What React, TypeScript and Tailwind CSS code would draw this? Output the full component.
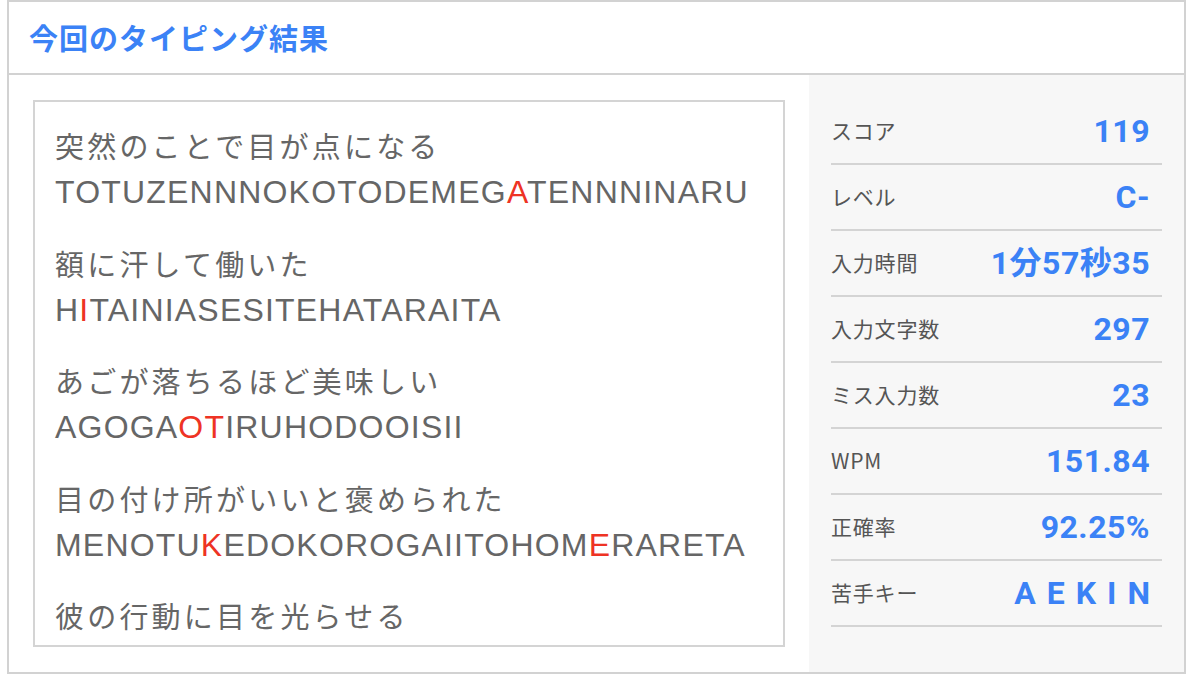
import React from "react";

type Seg = { t: string; miss?: boolean };

const groups: { jp: string; ro: Seg[] }[] = [
  {
    jp: "突然のことで目が点になる",
    ro: [{ t: "TOTUZENNNOKOTODEMEG" }, { t: "A", miss: true }, { t: "TENNNINARU" }],
  },
  {
    jp: "額に汗して働いた",
    ro: [{ t: "H" }, { t: "I", miss: true }, { t: "TAINIASESITEHATARAITA" }],
  },
  {
    jp: "あごが落ちるほど美味しい",
    ro: [{ t: "AGOGA" }, { t: "OT", miss: true }, { t: "IRUHODOOISII" }],
  },
  {
    jp: "目の付け所がいいと褒められた",
    ro: [
      { t: "MENOTU" },
      { t: "K", miss: true },
      { t: "EDOKOROGAIITOHOM" },
      { t: "E", miss: true },
      { t: "RARETA" },
    ],
  },
  {
    jp: "彼の行動に目を光らせる",
    ro: [],
  },
];

const stats: { label: string; value: string; wide?: boolean }[] = [
  { label: "スコア", value: "119" },
  { label: "レベル", value: "C-" },
  { label: "入力時間", value: "1分57秒35" },
  { label: "入力文字数", value: "297" },
  { label: "ミス入力数", value: "23" },
  { label: "WPM", value: "151.84" },
  { label: "正確率", value: "92.25%" },
  { label: "苦手キー", value: "AEKIN", wide: true },
];

export default function App() {
  return (
    <div className="w-[1188px] h-[678px] bg-white overflow-hidden">
      <div className="ml-[7px] w-[1179px] h-[674px] border-2 border-[#d2d2d2] flex flex-col">
        <div className="h-[73px] shrink-0 border-b-2 border-[#d2d2d2] flex items-center pl-[20px]">
          <h1
            className="text-[29px] font-bold text-[#3b82f6] tracking-[1px] leading-none"
            style={{ fontFamily: '"Noto Sans CJK JP", sans-serif' }}
          >
            今回のタイピング結果
          </h1>
        </div>
        <div className="flex flex-1 min-h-0">
          <div className="w-[800px] shrink-0 py-[25px] px-[24px]">
            <div className="h-full border-2 border-[#d4d4d4] px-[20px] pt-[20px] overflow-hidden">
              {groups.map((g, i) => (
                <div key={i} className="mb-[23.5px]">
                  <div
                    className="text-[29px] leading-[47px] text-[#666666] tracking-[3.2px] whitespace-nowrap"
                    style={{ fontFamily: '"Noto Sans CJK JP", sans-serif' }}
                  >
                    {g.jp}
                  </div>
                  {g.ro.length > 0 && (
                    <div
                      className="text-[32px] leading-[47px] text-[#666666] tracking-[1.2px] whitespace-nowrap"
                      style={{ fontFamily: '"Liberation Sans", Arial, sans-serif' }}
                    >
                      {g.ro.map((s, j) => (
                        <span key={j} className={s.miss ? "text-[#ee3324]" : ""}>
                          {s.t}
                        </span>
                      ))}
                    </div>
                  )}
                </div>
              ))}
            </div>
          </div>
          <div className="flex-1 bg-[#f7f7f7] px-[22px] pt-[24px]">
            {stats.map((s, i) => (
              <div
                key={i}
                className="h-[66px] border-b-2 border-[#d4d4d4] flex items-center justify-between pr-[12px]"
              >
                <span
                  className="text-[21px] text-[#555555] tracking-[0.8px]"
                  style={{ fontFamily: '"Noto Sans CJK JP", sans-serif' }}
                >
                  {s.label}
                </span>
                <span
                  className={
                    "font-bold text-[#3b82f6] leading-none text-[32px] " +
                    (s.wide ? "tracking-[11px] mr-[-11px]" : "tracking-[0.5px]")
                  }
                  style={{ fontFamily: 'Roboto, "Noto Sans CJK JP", sans-serif' }}
                >
                  {s.value}
                </span>
              </div>
            ))}
          </div>
        </div>
      </div>
    </div>
  );
}
